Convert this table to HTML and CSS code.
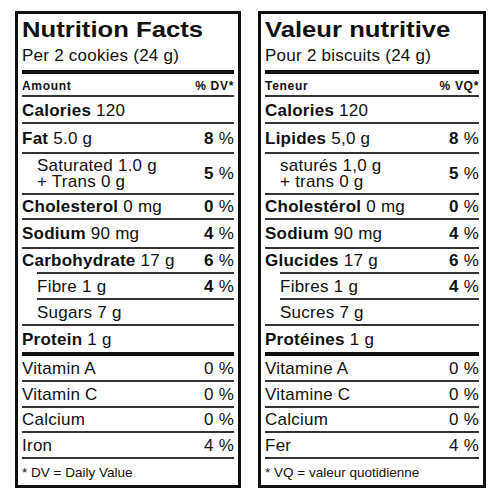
FILE: index.html
```
<!DOCTYPE html>
<html>
<head>
<meta charset="utf-8">
<link rel="stylesheet" href="styles.css">
</head>
<body>
<div class="wrap">
  <div class="nf">
    <div class="head">
      <div class="title">Nutrition Facts</div>
      <div class="serving">Per 2 cookies (24 g)</div>
    </div>
    <div class="row hdr"><span>Amount</span><span>% DV*</span></div>
    <div class="row cal"><span><b>Calories</b> 120</span></div>
    <div class="row fat"><span><b>Fat</b> 5.0 g</span><span class="pct"><b>8</b> %</span></div>
    <div class="row sat ind"><span class="two">Saturated 1.0 g<br>+ Trans 0 g</span><span class="pct"><b>5</b> %</span></div>
    <div class="row chol"><span><b>Cholesterol</b> 0 mg</span><span class="pct"><b>0</b> %</span></div>
    <div class="row sod"><span><b>Sodium</b> 90 mg</span><span class="pct"><b>4</b> %</span></div>
    <div class="row carb"><span><b>Carbohydrate</b> 17 g</span><span class="pct"><b>6</b> %</span></div>
    <div class="row fib"><span>Fibre 1 g</span><span class="pct"><b>4</b> %</span></div>
    <div class="row sug ind"><span>Sugars 7 g</span></div>
    <div class="row prot"><span><b>Protein</b> 1 g</span></div>
    <div class="row vit"><span>Vitamin A</span><span>0 %</span></div>
    <div class="row vit"><span>Vitamin C</span><span>0 %</span></div>
    <div class="row vit min"><span>Calcium</span><span>0 %</span></div>
    <div class="row vit"><span>Iron</span><span>4 %</span></div>
    <div class="row foot"><span>* DV = Daily Value</span></div>
  </div>
  <div class="nf fr">
    <div class="head">
      <div class="title">Valeur nutritive</div>
      <div class="serving">Pour 2 biscuits (24 g)</div>
    </div>
    <div class="row hdr"><span>Teneur</span><span>% VQ*</span></div>
    <div class="row cal"><span><b>Calories</b> 120</span></div>
    <div class="row fat"><span><b>Lipides</b> 5,0 g</span><span class="pct"><b>8</b> %</span></div>
    <div class="row sat ind"><span class="two">saturés 1,0 g<br>+ trans 0 g</span><span class="pct"><b>5</b> %</span></div>
    <div class="row chol"><span><b>Cholestérol</b> 0 mg</span><span class="pct"><b>0</b> %</span></div>
    <div class="row sod"><span><b>Sodium</b> 90 mg</span><span class="pct"><b>4</b> %</span></div>
    <div class="row carb"><span><b>Glucides</b> 17 g</span><span class="pct"><b>6</b> %</span></div>
    <div class="row fib"><span>Fibres 1 g</span><span class="pct"><b>4</b> %</span></div>
    <div class="row sug ind"><span>Sucres 7 g</span></div>
    <div class="row prot"><span><b>Protéines</b> 1 g</span></div>
    <div class="row vit"><span>Vitamine A</span><span>0 %</span></div>
    <div class="row vit"><span>Vitamine C</span><span>0 %</span></div>
    <div class="row vit min"><span>Calcium</span><span>0 %</span></div>
    <div class="row vit"><span>Fer</span><span>4 %</span></div>
    <div class="row foot"><span>* VQ = valeur quotidienne</span></div>
  </div>
</div>
</body>
</html>
```
FILE: styles.css
```
body {
  margin: 0;
  background: #fff;
  font-family: "Liberation Sans", Arial, sans-serif;
  color: #111;
}
.wrap {
  display: flex;
  gap: 17px;
  padding: 11px 0 0 15px;
}
.nf {
  width: 226px;
  height: 477px;
  box-sizing: border-box;
  border: 3px solid #111;
  padding: 0 4px;
  display: flex;
  flex-direction: column;
}
.nf.fr {
  width: 228px;
}
.head {
  height: 60px;
  box-sizing: border-box;
  border-bottom: 4px solid #111;
  padding-top: 4px;
  flex: none;
}
.title {
  font-weight: bold;
  font-size: 22.5px;
  line-height: 24px;
  transform: scaleX(1.14);
  transform-origin: left center;
  white-space: nowrap;
}
.serving {
  font-size: 17px;
  line-height: 20px;
  margin-top: 4px;
  letter-spacing: 0.25px;
  white-space: nowrap;
}
.row {
  display: flex;
  justify-content: space-between;
  align-items: center;
  box-sizing: border-box;
  border-bottom: 2px solid #333;
  font-size: 17px;
  line-height: 18px;
  letter-spacing: 0.25px;
  padding-top: 1px;
  flex: none;
  white-space: nowrap;
}
.hdr {
  height: 23px;
  font-size: 12px;
  font-weight: bold;
  letter-spacing: 0.7px;
  padding-top: 3px;
}
.cal { height: 27px; padding-top: 3px; }
.fat { height: 30px; padding-top: 2px; }
.sat { height: 41px; }
.two { line-height: 16px; }
.chol { height: 25px; }
.sod { height: 29px; }
.carb { height: 23px; border-bottom: none; }
.fib {
  height: 28px;
  margin-left: 15px;
  border-top: 2px solid #333;
}
.sug { height: 26px; }
.prot {
  height: 30px;
  border-bottom: 4px solid #111;
}
.vit { height: 26px; }
.vit.min { height: 25px; }
.ind { padding-left: 15px; }
.foot {
  height: 26px;
  border-bottom: none;
  font-size: 13.5px;
  letter-spacing: 0;
}
.pct b { font-weight: bold; }
```
